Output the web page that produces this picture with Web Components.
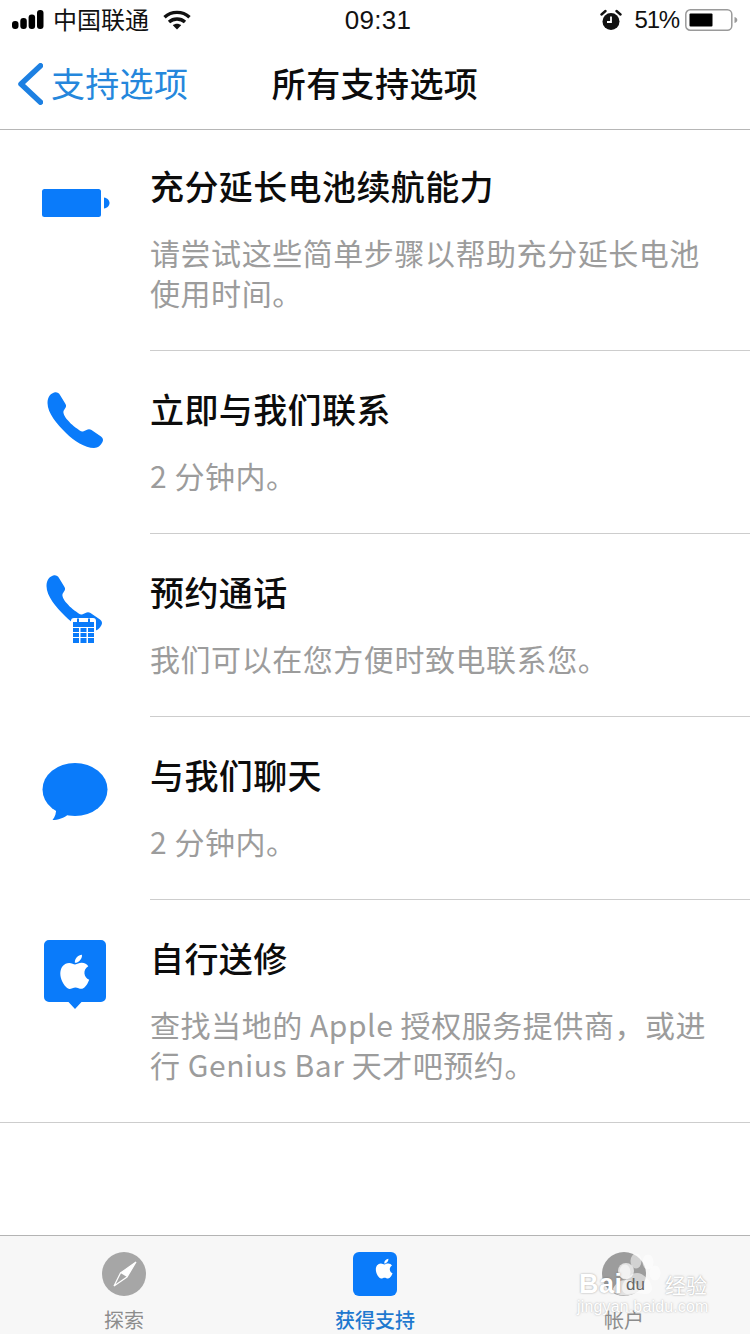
<!DOCTYPE html>
<html lang="zh-CN">
<head>
<meta charset="utf-8">
<title>所有支持选项</title>
<style>
  html, body { margin: 0; padding: 0; background: #fff; }
  body { font-family: "Noto Sans CJK SC", "Liberation Sans", sans-serif; }
</style>
</head>
<body>
<support-app>
  <status-bar></status-bar>
  <nav-bar back="支持选项" heading="所有支持选项"></nav-bar>
  <support-list>
    <support-row first>
      <svg slot="icon" viewBox="0 130 150 120" width="150" height="120">
        <rect x="42" y="189" width="59" height="28" rx="2.5" fill="#0a7bfa"/>
        <path d="M104 197.500c3.500 .5 5.500 3 5.500 5.500s-2 5-5.500 5.500z" fill="#0a7bfa"/>
      </svg>
      <span slot="title">充分延长电池续航能力</span>
      请尝试这些简单步骤以帮助充分延长电池使用时间。
    </support-row>
    <support-row>
      <svg slot="icon" viewBox="0 351 150 120" width="150" height="120">
        <path transform="translate(47 392)" fill="#0a7bfa" d="M.5 11C.5 5 4 1 8 .3 10 0 12 1 13 3l5.500 9c1 2 .5 3-.5 4.500L16.500 19c-.5 2 .5 4 2 6.500C21 29 26 34 30 36.500c2 1.500 4 3.500 6 3L39.500 38c1.500-1 3.500-1 5 0l9.500 6.500c2 1.500 2.500 3.500 1.500 5.500-1.500 3-4.500 6-8.500 6-9 0-20-7-28-15C10 32 .5 21 .5 11z"/>
      </svg>
      <span slot="title">立即与我们联系</span>
      2 分钟内。
    </support-row>
    <support-row>
      <svg slot="icon" viewBox="0 534 150 120" width="150" height="120">
        <path transform="translate(46 575)" fill="#0a7bfa" d="M.5 11C.5 5 4 1 8 .3 10 0 12 1 13 3l5.500 9c1 2 .5 3-.5 4.500L16.500 19c-.5 2 .5 4 2 6.500C21 29 26 34 30 36.500c2 1.500 4 3.500 6 3L39.500 38c1.500-1 3.500-1 5 0l9.500 6.500c2 1.500 2.500 3.500 1.500 5.500-1.500 3-4.500 6-8.500 6-9 0-20-7-28-15C10 32 .5 21 .5 11z"/>
        <rect x="71" y="618" width="25" height="27" rx="3" fill="#fff"/>
        <rect x="73" y="622" width="21" height="5" fill="#0a7bfa"/>
        <path d="M78 618.500v5M89 618.500v5" stroke="#0a7bfa" stroke-width="2"/>
        <g fill="#0a7bfa">
          <rect x="73" y="628" width="6" height="4"/><rect x="80.500" y="628" width="6" height="4"/><rect x="88" y="628" width="6" height="4"/>
          <rect x="73" y="633" width="6" height="4"/><rect x="80.500" y="633" width="6" height="4"/><rect x="88" y="633" width="6" height="4"/>
          <rect x="73" y="638" width="6" height="5"/><rect x="80.500" y="638" width="6" height="5"/><rect x="88" y="638" width="6" height="5"/>
        </g>
      </svg>
      <span slot="title">预约通话</span>
      我们可以在您方便时致电联系您。
    </support-row>
    <support-row>
      <svg slot="icon" viewBox="0 717 150 120" width="150" height="120">
        <ellipse cx="75" cy="789.500" rx="32.500" ry="26.500" fill="#0a7bfa"/>
        <path d="M56 808c.5 5-1 9-3.500 12 5 0 12-2 16-6z" fill="#0a7bfa"/>
      </svg>
      <span slot="title">与我们聊天</span>
      2 分钟内。
    </support-row>
    <support-row last>
      <svg slot="icon" viewBox="0 900 150 120" width="150" height="120">
        <path d="M49 940h52a5 5 0 0 1 5 5v52a5 5 0 0 1-5 5H81.500L75 1009l-6.500-7H49a5 5 0 0 1-5-5v-52a5 5 0 0 1 5-5z" fill="#0a7bfa"/>
        <path transform="translate(52 949) scale(1.9)" fill="#fff" d="M17.050 20.280c-.98.95-2.050.8-3.080.35-1.090-.46-2.090-.48-3.240 0-1.440.62-2.200.44-3.060-.35C2.790 15.250 3.510 7.590 9.050 7.310c1.350.07 2.290.74 3.080.8 1.180-.24 2.310-.93 3.570-.84 1.510.12 2.650.72 3.400 1.800-3.120 1.870-2.380 5.980.48 7.130-.57 1.500-1.310 2.990-2.540 4.090zM12.030 7.250c-.15-2.230 1.660-4.070 3.740-4.250.29 2.580-2.340 4.500-3.740 4.250z"/>
      </svg>
      <span slot="title">自行送修</span>
      查找当地的 Apple 授权服务提供商，或进行 Genius Bar 天才吧预约。
    </support-row>
  </support-list>
  <tab-bar>
    <tab-item label="探索">
      <svg viewBox="0 0 44 44" width="44" height="44">
        <circle cx="22" cy="22" r="22" fill="#a6a6a6"/>
        <path d="M34 10 18.500 21 12 34l13-9z" fill="none" stroke="#fff" stroke-width="1.200"/>
        <path d="M34 10 18.500 21l6.500 4z" fill="#fff"/>
      </svg>
    </tab-item>
    <tab-item label="获得支持" active>
      <svg viewBox="0 0 44 44" width="44" height="44">
        <rect width="44" height="44" rx="6" fill="#0a7bfa"/>
        <path transform="translate(18 3.500) scale(1.100)" fill="#fff" d="M17.050 20.280c-.98.95-2.050.8-3.080.35-1.090-.46-2.090-.48-3.240 0-1.440.62-2.200.44-3.060-.35C2.790 15.250 3.510 7.590 9.050 7.310c1.350.07 2.290.74 3.080.8 1.180-.24 2.310-.93 3.570-.84 1.510.12 2.650.72 3.400 1.800-3.120 1.870-2.380 5.980.48 7.130-.57 1.500-1.310 2.990-2.540 4.090zM12.030 7.250c-.15-2.230 1.660-4.070 3.740-4.250.29 2.580-2.340 4.500-3.740 4.250z"/>
      </svg>
    </tab-item>
    <tab-item label="帐户">
      <svg viewBox="0 0 44 44" width="44" height="44">
        <circle cx="22" cy="22" r="22" fill="#9c9c9c"/>
        <circle cx="24" cy="19" r="8" fill="#e2e2e2"/>
        <path d="M10 39c3-8 8-11 14-11s11 3 14 10a22 22 0 0 1-28 1z" fill="#e2e2e2"/>
      </svg>
    </tab-item>
  </tab-bar>
  <baidu-mark></baidu-mark>
</support-app>

<script>
(function () {
  const CJK = '"Noto Sans CJK SC", "Liberation Sans", sans-serif';

  class SupportApp extends HTMLElement {
    constructor() {
      super();
      this.attachShadow({ mode: "open" }).innerHTML = `
<style>
  :host { display: flex; flex-direction: column; position: relative; width: 750px; height: 1334px; overflow: hidden; background: #fff; color: #000; font-family: ${CJK}; }
</style>
<slot></slot>`;
    }
  }

  class StatusBar extends HTMLElement {
    constructor() {
      super();
      this.attachShadow({ mode: "open" }).innerHTML = `
<style>
  :host { display: grid; grid-template-columns: 1fr auto 1fr; align-items: center; height: 40px; padding: 0 12px; box-sizing: border-box; font-size: 24px; color: #111; }
  .left, .right { display: flex; align-items: center; }
  .left { gap: 8px; }
  .right { justify-content: flex-end; padding-right: 0; }
  .carrier { line-height: 38px; padding-bottom: 2px; }
  .wifi { margin-left: 6px; }
  .time { font-family: "Liberation Sans", sans-serif; font-size: 26px; letter-spacing: .3px; margin-left: 6px; }
  .pct { font-family: "Liberation Sans", sans-serif; font-size: 24px; letter-spacing: -1.200px; margin: 0 6px 0 13px; }
  svg { display: block; }
</style>
<div class="left">
  <svg width="33" height="20" viewBox="0 0 33 20">
    <rect x="0" y="11" width="6.500" height="8" rx="3"/>
    <rect x="8.300" y="8" width="6.500" height="11" rx="3"/>
    <rect x="16.600" y="4.500" width="6.500" height="14.500" rx="3"/>
    <rect x="25" y="0" width="6.500" height="19" rx="3"/>
  </svg>
  <span class="carrier">中国联通</span>
  <svg class="wifi" width="28" height="20" viewBox="0 0 28 20" fill="none" stroke="#111" stroke-width="3.400">
    <path d="M1.500 7.200c7-6.500 18-6.500 25 0"/>
    <path d="M6 12c4.500-4 11.500-4 16 0"/>
    <path d="M14 19.500 9.800 15.200c2.400-2 6-2 8.400 0z" fill="#111" stroke="none"/>
  </svg>
</div>
<div class="time">09:31</div>
<div class="right">
  <svg width="22" height="22" viewBox="0 0 22 22" style="margin-left:1px">
    <circle cx="11" cy="12.500" r="8.500" fill="#111"/>
    <path d="M11 7.500v5.500H7" fill="none" stroke="#fff" stroke-width="1.800"/>
    <path d="M1.500 5.500 5.500 2M20.500 5.500 16.500 2" stroke="#111" stroke-width="2.400" stroke-linecap="round"/>
  </svg>
  <span class="pct">51%</span>
  <svg width="53" height="22" viewBox="0 0 53 22">
    <rect x=".8" y=".8" width="46" height="20.400" rx="4.500" fill="none" stroke="#9a9a9a" stroke-width="1.500"/>
    <rect x="4.500" y="4.500" width="23" height="13" rx="1" fill="#000"/>
    <path d="M49.500 8c2 .4 2.800 1.700 2.800 3s-.8 2.600-2.800 3z" fill="#9a9a9a"/>
  </svg>
</div>`;
    }
  }

  class NavBar extends HTMLElement {
    constructor() {
      super();
      this.attachShadow({ mode: "open" }).innerHTML = `
<style>
  :host { display: grid; grid-template-columns: 1fr auto 1fr; align-items: center; height: 90px; box-sizing: border-box; border-bottom: 1px solid #b6b6b6; font-size: 34px; padding-bottom: 4px; }
  .back { display: flex; align-items: center; gap: 8px; padding-left: 18px; color: #2587dc; letter-spacing: .3px; }
  svg { display: block; margin-top: 2px; }
  .heading { color: #0c0c0c; font-weight: 500; letter-spacing: .4px; }
</style>
<div class="back">
  <svg width="25" height="42" viewBox="0 0 25 42" fill="none" stroke="#1d80e2" stroke-width="5.500" stroke-linecap="round" stroke-linejoin="round">
    <path d="M22.500 2.800 3 21l19.500 18.200"/>
  </svg>
  <span id="back"></span>
</div>
<div class="heading" id="heading"></div>
<div></div>`;
    }
    connectedCallback() {
      this.shadowRoot.getElementById("back").textContent = this.getAttribute("back");
      this.shadowRoot.getElementById("heading").textContent = this.getAttribute("heading");
    }
  }

  class SupportList extends HTMLElement {
    constructor() {
      super();
      this.attachShadow({ mode: "open" }).innerHTML = `
<style>
  :host { display: block; flex: 1; }
</style>
<slot></slot>`;
    }
  }

  class SupportRow extends HTMLElement {
    constructor() {
      super();
      this.attachShadow({ mode: "open" }).innerHTML = `
<style>
  :host { display: grid; grid-template-columns: 150px 1fr; box-sizing: border-box; }
  :host([last]) { border-bottom: 1px solid #cdcdcd; }
  .content { padding: 34px 0 38px 0; border-bottom: 1px solid #cdcdcd; }
  :host([first]) .content { padding-top: 32px; }
  :host([last]) .content { border-bottom: 0; }
  .title { font-size: 34px; line-height: 48px; font-weight: 500; letter-spacing: .4px; color: #0c0c0c; }
  .sub { margin-top: 22px; margin-right: 38px; font-size: 30px; line-height: 40px; color: #9c9c9c; letter-spacing: .55px; }
  ::slotted(svg) { display: block; }
</style>
<div class="icon"><slot name="icon"></slot></div>
<div class="content">
  <div class="title"><slot name="title"></slot></div>
  <div class="sub"><slot></slot></div>
</div>`;
    }
  }

  class TabBar extends HTMLElement {
    constructor() {
      super();
      this.attachShadow({ mode: "open" }).innerHTML = `
<style>
  :host { display: grid; grid-template-columns: 248px 254px 244px; height: 99px; box-sizing: border-box; border-top: 1px solid #b4b4b4; background: #f7f7f7; padding-top: 16px; }
</style>
<slot></slot>`;
    }
  }

  class TabItem extends HTMLElement {
    constructor() {
      super();
      this.attachShadow({ mode: "open" }).innerHTML = `
<style>
  :host { display: flex; flex-direction: column; align-items: center; color: #8c8c8c; font-size: 20px; }
  :host([active]) { color: #1f79cf; font-weight: 500; }
  ::slotted(svg) { display: block; }
  .label { line-height: 18px; margin-top: 15px; }
</style>
<slot></slot>
<div class="label" id="label"></div>`;
    }
    connectedCallback() {
      this.shadowRoot.getElementById("label").textContent = this.getAttribute("label");
    }
  }

  class BaiduMark extends HTMLElement {
    constructor() {
      super();
      this.attachShadow({ mode: "open" }).innerHTML = `
<style>
  :host { position: absolute; left: 576px; top: 1250px; width: 140px; height: 62px; display: block; pointer-events: none; font-family: "Liberation Sans", sans-serif; }
  svg { position: absolute; left: 36px; top: 0; }
  span { position: absolute; white-space: nowrap; color: #fff; text-shadow: 0 0 2px rgba(90,90,90,.6); }
  .bai { left: 3px; top: 19px; font-size: 27px; font-weight: 700; line-height: 30px; letter-spacing: .5px; }
  .du { left: 50px; top: 26px; font-size: 17px; line-height: 18px; color: #666; text-shadow: none; }
  .jy { left: 89px; top: 20px; font-size: 21px; line-height: 28px; font-family: ${CJK}; }
  .url { left: 1px; top: 51px; font-size: 16px; line-height: 11px; letter-spacing: .15px; text-shadow: 0 0 2px rgba(110,110,110,.55); }
</style>
<svg width="50" height="50" viewBox="0 0 50 50" fill="rgba(255,255,255,.55)">
  <ellipse cx="24" cy="11" rx="5.500" ry="7.500"/>
  <ellipse cx="36" cy="12" rx="5.500" ry="7.500"/>
  <ellipse cx="13" cy="22" rx="5.500" ry="7.500"/>
  <ellipse cx="43" cy="23" rx="5.500" ry="7.500"/>
  <path d="M25 23c6 0 15 8 15 15 0 5-4 6-7 6-3 0-5-1-8-1s-6 1-9 1c-3 0-6-2-6-6 0-7 9-15 15-15z"/>
</svg>
<span class="bai">Bai</span>
<span class="du">du</span>
<span class="jy">经验</span>
<span class="url">jingyan.baidu.com</span>`;
    }
  }

  customElements.define("support-app", SupportApp);
  customElements.define("status-bar", StatusBar);
  customElements.define("nav-bar", NavBar);
  customElements.define("support-list", SupportList);
  customElements.define("support-row", SupportRow);
  customElements.define("tab-bar", TabBar);
  customElements.define("tab-item", TabItem);
  customElements.define("baidu-mark", BaiduMark);
})();
</script>
</body>
</html>
